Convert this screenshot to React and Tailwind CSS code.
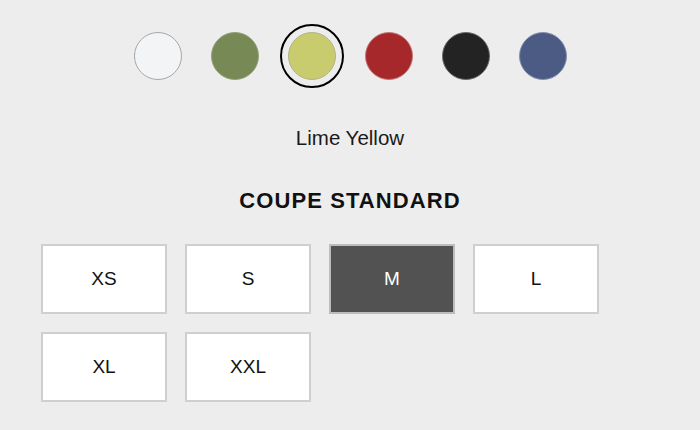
import React from "react";

const colors = [
  { name: "White", bg: "bg-[#f3f4f6]", border: "border-[#a8a8a8]" },
  { name: "Olive", bg: "bg-[#778954]", border: "border-[#93a07a]" },
  { name: "Lime Yellow", bg: "bg-[#c8cc6f]", border: "border-[#b3b585]", selected: true },
  { name: "Red", bg: "bg-[#a6282a]", border: "border-[#c77777]" },
  { name: "Black", bg: "bg-[#232323]", border: "border-[#6a6a6a]" },
  { name: "Blue", bg: "bg-[#4b5b83]", border: "border-[#8591ad]" },
];

const sizes = ["XS", "S", "M", "L", "XL", "XXL"];

export default function App() {
  return (
    <div
      className="w-[700px] h-[430px] bg-[#ededed] flex flex-col overflow-hidden"
      style={{ fontFamily: '"Liberation Sans", Arial, sans-serif' }}
    >
      <div className="mt-[23px] flex justify-center gap-[11px] h-[66px]">
        {colors.map((c) => (
          <div key={c.name} className="w-[66px] h-[66px] flex items-center justify-center">
            <div
              className={
                c.selected
                  ? "w-[64px] h-[64px] rounded-full border-2 border-black flex items-center justify-center"
                  : "w-[64px] h-[64px] flex items-center justify-center"
              }
            >
              <div className={`w-[48px] h-[48px] rounded-full border-[1.5px] ${c.bg} ${c.border}`} />
            </div>
          </div>
        ))}
      </div>
      <div className="mt-[37px] text-center text-[20.5px] leading-[24px] text-[#1a1a1a]">Lime Yellow</div>
      <div className="mt-[38px] text-center text-[22px] leading-[26px] font-bold tracking-[1.1px] text-[#111]">
        COUPE STANDARD
      </div>
      <div className="mt-[30px] pl-[41px] grid grid-cols-[repeat(4,126px)] gap-x-[18px] gap-y-[18px]">
        {sizes.map((s) => (
          <div
            key={s}
            className={
              s === "M"
                ? "h-[70px] flex items-center justify-center bg-[#525252] border-2 border-[#bdbdbd] text-white text-[19px]"
                : "h-[70px] flex items-center justify-center bg-white border-2 border-[#cfcfcf] text-[#111] text-[19px]"
            }
          >
            {s}
          </div>
        ))}
      </div>
    </div>
  );
}
